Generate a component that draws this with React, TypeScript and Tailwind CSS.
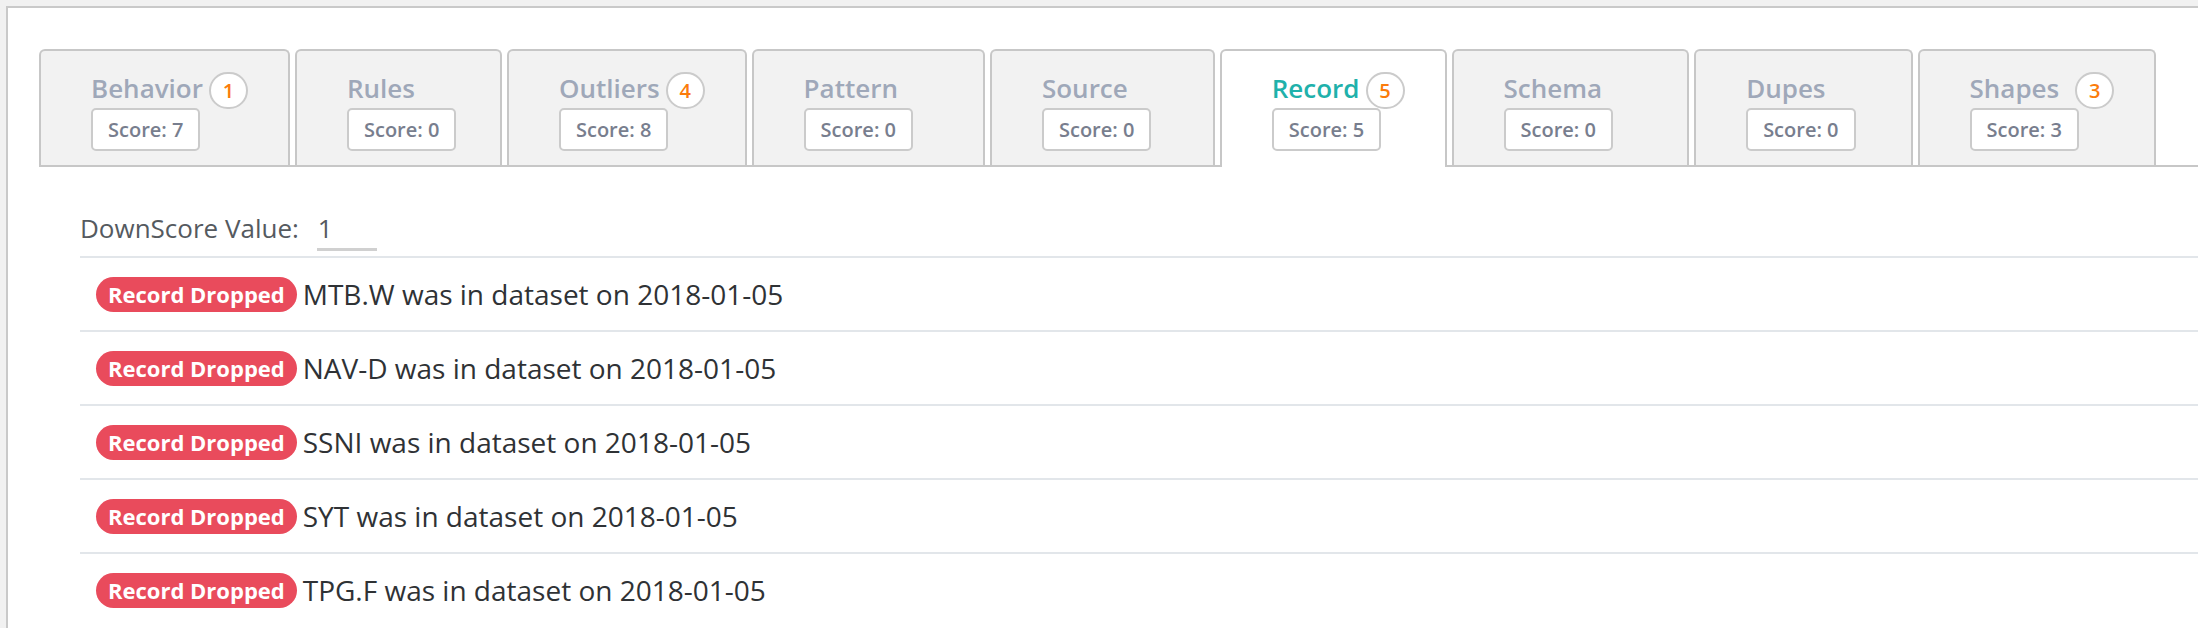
import React from 'react';

type Tab = {
  name: string;
  score: number;
  badge?: number;
  gap?: string;
  active?: boolean;
};

const tabs: Tab[] = [
  { name: 'Behavior', score: 7, badge: 1, gap: 'ml-[6px]' },
  { name: 'Rules', score: 0 },
  { name: 'Outliers', score: 8, badge: 4, gap: 'ml-[6px]' },
  { name: 'Pattern', score: 0 },
  { name: 'Source', score: 0 },
  { name: 'Record', score: 5, badge: 5, gap: 'ml-[6px]', active: true },
  { name: 'Schema', score: 0 },
  { name: 'Dupes', score: 0 },
  { name: 'Shapes', score: 3, badge: 3, gap: 'ml-[16px]' },
];

const dropped = ['MTB.W', 'NAV-D', 'SSNI', 'SYT', 'TPG.F'];

function TabItem({ tab }: { tab: Tab }) {
  return (
    <div
      className={
        tab.active
          ? 'bg-white border-2 border-b-0 border-[#c7c7c7] rounded-t-[6px] pl-[50px] pr-[40px] pt-[19px] pb-[16px] -mb-[2px]'
          : 'bg-[#f2f2f2] border-2 border-b-0 border-[#c7c7c7] rounded-t-[6px] pl-[50px] pr-[40px] pt-[19px] pb-[14px]'
      }
    >
      <div className="flex items-start h-[38px]">
        <span
          className={
            tab.active
              ? 'text-[26px] leading-[36px] font-semibold text-[#1fb1ab]'
              : 'text-[26px] leading-[36px] font-semibold text-[#9fa8b9]'
          }
        >
          {tab.name}
        </span>
        {tab.badge ? (
          <span className={`${tab.gap} mt-[2px] w-[39px] h-[37px] rounded-full border-2 border-[#cbcbcb] bg-white flex items-center justify-center text-[20px] font-semibold text-[#fb7c0c]`}>
            {tab.badge}
          </span>
        ) : (
          <span className="invisible ml-[6px] mt-[2px] w-[39px] h-[37px]" />
        )}
      </div>
      <div className="inline-block bg-white border-2 border-[#cbcbcb] rounded-[5px] px-[15px] text-[20px] leading-[39px] font-semibold text-[#787e8e]">
        Score: {tab.score}
      </div>
    </div>
  );
}

export default function App() {
  return (
    <div className="min-h-screen bg-[#f1f1f1] pt-[6px] pl-[6px] font-['Open_Sans',sans-serif] overflow-hidden">
      <div className="bg-white border-l-2 border-t-2 border-[#c9c9c9] h-[622px]">
        <div className="pl-[31px] pt-[41px]">
          <div className="flex items-end gap-[5px] border-b-2 border-[#c7c7c7]">
            {tabs.map(tab => (
              <TabItem key={tab.name} tab={tab} />
            ))}
          </div>

          <div className="ml-[41px] pt-[43px]">
            <div className="flex items-start h-[46px]">
              <span className="text-[26px] leading-[36px] text-[#555a5f]">DownScore Value:</span>
              <div className="ml-[18px] w-[60px] h-[41px] border-b-[3px] border-[#d0d0d0] text-[26px] leading-[36px] text-[#555a5f] pl-[1px]">
                1
              </div>
            </div>

            {dropped.map(name => (
              <div key={name} className="border-t-2 border-[#e2e6ea] h-[74px] flex items-center pl-[16px]">
                <span className="bg-[#e94b5c] text-white rounded-full px-[12px] h-[35px] leading-[35px] text-[22px] font-bold">
                  Record Dropped
                </span>
                <span className="ml-[6px] text-[28px] leading-[36px] text-[#2f3235]">
                  {name} was in dataset on 2018-01-05
                </span>
              </div>
            ))}
          </div>
        </div>
      </div>
    </div>
  );
}
